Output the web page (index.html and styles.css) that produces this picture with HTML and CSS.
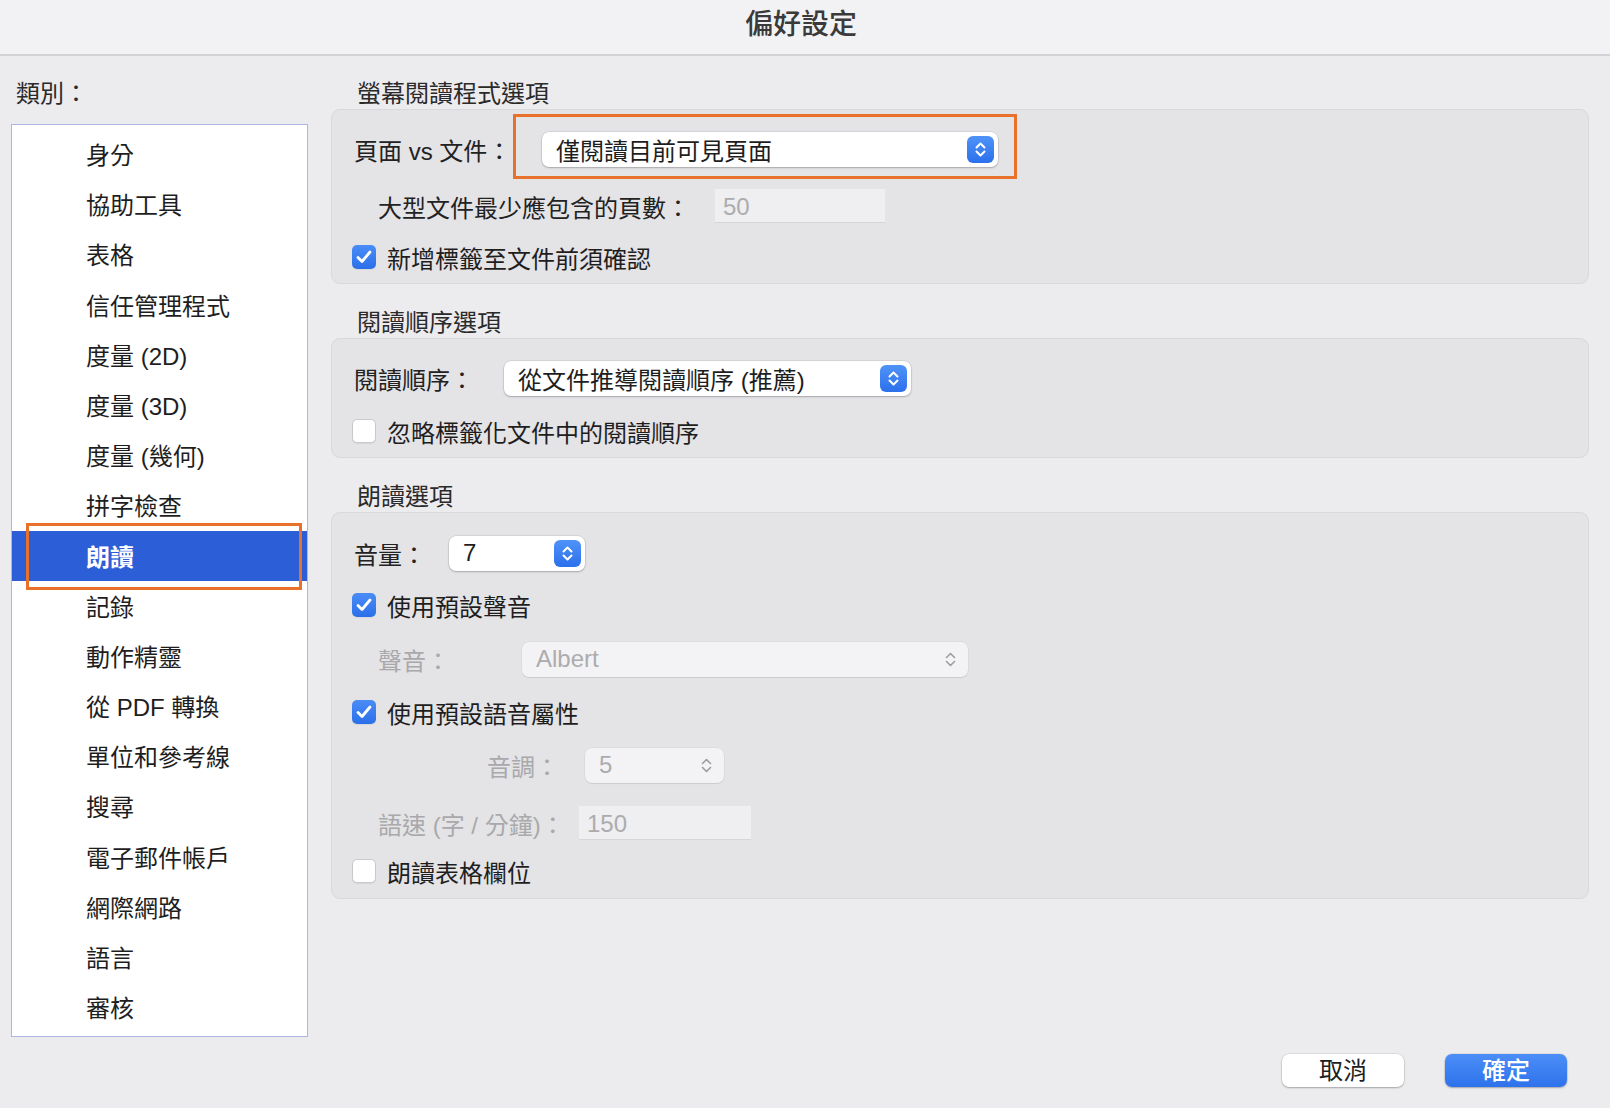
FILE: index.html
```html
<!DOCTYPE html>
<html lang="zh-Hant">

<head>
    <meta charset="UTF-8">
    <meta name="viewport" content="width=device-width, initial-scale=1.0">
    <title>偏好設定</title>
    <link rel="stylesheet" href="styles.css">
</head>

<body>
    <header class="titlebar">偏好設定</header>

    <div class="main">
        <div class="categories">
            <div class="categories-label">類別：</div>
            <ul class="category-list">
                <li>身分</li>
                <li>協助工具</li>
                <li>表格</li>
                <li>信任管理程式</li>
                <li>度量 (2D)</li>
                <li>度量 (3D)</li>
                <li>度量 (幾何)</li>
                <li>拼字檢查</li>
                <li class="selected">朗讀<span class="callout"></span></li>
                <li>記錄</li>
                <li>動作精靈</li>
                <li>從 PDF 轉換</li>
                <li>單位和參考線</li>
                <li>搜尋</li>
                <li>電子郵件帳戶</li>
                <li>網際網路</li>
                <li>語言</li>
                <li>審核</li>
            </ul>
        </div>

        <div class="panel">
            <!-- 螢幕閱讀程式 -->
            <div class="section-title">螢幕閱讀程式選項</div>
            <div class="group group-reader">
                <div class="row row-tall">
                    <span class="label label-page">頁面 vs 文件：</span>
                    <div class="popup popup-page">
                        <span>僅閱讀目前可見頁面</span>
                        <span class="stepper">
                            <svg width="27" height="27" viewBox="0 0 27 27"><path d="M9.5 11.5 L13.5 7.5 L17.5 11.5 M9.5 15.5 L13.5 19.5 L17.5 15.5" /></svg>
                        </span>
                        <span class="callout"></span>
                    </div>
                </div>
                <div class="row row-tall row-pages">
                    <span class="label label-pages">大型文件最少應包含的頁數：</span>
                    <div class="field field-pages">50</div>
                </div>
                <div class="row row-check row-confirm">
                    <span class="checkbox checked">
                        <svg width="24" height="24" viewBox="0 0 24 24"><path d="M6 12.5 L10 16.5 L18 7" /></svg>
                    </span>
                    <span class="check-label">新增標籤至文件前須確認</span>
                </div>
            </div>

            <!-- 閱讀順序 -->
            <div class="section-title">閱讀順序選項</div>
            <div class="group group-order">
                <div class="row row-tall">
                    <span class="label label-order">閱讀順序：</span>
                    <div class="popup popup-order">
                        <span>從文件推導閱讀順序 (推薦)</span>
                        <span class="stepper">
                            <svg width="27" height="27" viewBox="0 0 27 27"><path d="M9.5 11.5 L13.5 7.5 L17.5 11.5 M9.5 15.5 L13.5 19.5 L17.5 15.5" /></svg>
                        </span>
                    </div>
                </div>
                <div class="row row-check row-ignore">
                    <span class="checkbox"></span>
                    <span class="check-label">忽略標籤化文件中的閱讀順序</span>
                </div>
            </div>

            <!-- 朗讀 -->
            <div class="section-title">朗讀選項</div>
            <div class="group group-speech">
                <div class="row row-tall">
                    <span class="label label-volume">音量：</span>
                    <div class="popup popup-volume">
                        <span>7</span>
                        <span class="stepper">
                            <svg width="27" height="27" viewBox="0 0 27 27"><path d="M9.5 11.5 L13.5 7.5 L17.5 11.5 M9.5 15.5 L13.5 19.5 L17.5 15.5" /></svg>
                        </span>
                    </div>
                </div>
                <div class="row row-check sp-1">
                    <span class="checkbox checked">
                        <svg width="24" height="24" viewBox="0 0 24 24"><path d="M6 12.5 L10 16.5 L18 7" /></svg>
                    </span>
                    <span class="check-label">使用預設聲音</span>
                </div>
                <div class="row row-tall sp-2">
                    <span class="label disabled label-voice">聲音：</span>
                    <div class="popup disabled popup-voice">
                        <span>Albert</span>
                        <span class="stepper">
                            <svg width="27" height="27" viewBox="0 0 27 27"><path d="M9.5 11.5 L13.5 7.5 L17.5 11.5 M9.5 15.5 L13.5 19.5 L17.5 15.5" /></svg>
                        </span>
                    </div>
                </div>
                <div class="row row-check sp-3">
                    <span class="checkbox checked">
                        <svg width="24" height="24" viewBox="0 0 24 24"><path d="M6 12.5 L10 16.5 L18 7" /></svg>
                    </span>
                    <span class="check-label">使用預設語音屬性</span>
                </div>
                <div class="row row-tall sp-4">
                    <span class="label disabled label-pitch">音調：</span>
                    <div class="popup disabled popup-pitch">
                        <span>5</span>
                        <span class="stepper">
                            <svg width="27" height="27" viewBox="0 0 27 27"><path d="M9.5 11.5 L13.5 7.5 L17.5 11.5 M9.5 15.5 L13.5 19.5 L17.5 15.5" /></svg>
                        </span>
                    </div>
                </div>
                <div class="row row-tall sp-5">
                    <span class="label disabled label-rate">語速 (字 / 分鐘)：</span>
                    <div class="field field-rate">150</div>
                </div>
                <div class="row row-check sp-6">
                    <span class="checkbox"></span>
                    <span class="check-label">朗讀表格欄位</span>
                </div>
            </div>
        </div>
    </div>

    <footer class="buttons">
        <button class="btn">取消</button>
        <button class="btn btn-primary">確定</button>
    </footer>
</body>

</html>
```

FILE: styles.css
```css
body {
    margin: 0;
    padding: 0;
    width: 1610px;
    height: 1108px;
    display: flex;
    flex-direction: column;
    background-color: #ecebee;
    color: #222222;
    font-family: "Liberation Sans", "Noto Sans CJK TC", sans-serif;
    font-size: 24px;
    overflow: hidden;
}

.titlebar {
    height: 54px;
    line-height: 50px;
    text-align: center;
    font-size: 28px;
    font-weight: 500;
    color: #3a3a3a;
    background-color: #f2f1f4;
    border-bottom: 2px solid #d3d2d6;
    padding-right: 8px;
}

.main {
    flex: 1;
    display: flex;
    padding-top: 23px;
    min-height: 0;
}

/* colonne de gauche */
.categories {
    width: 297px;
    margin-left: 11px;
    display: flex;
    flex-direction: column;
}

.categories-label {
    height: 30px;
    line-height: 30px;
    padding-left: 5px;
    margin-bottom: 15px;
    color: #2a2a2a;
}

.category-list {
    flex: 1;
    list-style: none;
    margin: 0;
    padding: 4px 0 0 0;
    background-color: #ffffff;
    border: 1px solid #a9b9e4;
}

.category-list li {
    position: relative;
    height: 50.2px;
    line-height: 53px;
    padding-left: 74px;
    color: #1e1e1e;
}

.category-list li.selected {
    background-color: #2c5fd7;
    color: #ffffff;
    font-weight: bold;
}

.callout {
    position: absolute;
    border: 3px solid #e8712c;
    pointer-events: none;
}

.category-list li .callout {
    left: 14px;
    right: 5px;
    top: -8px;
    bottom: -9px;
}

/* panneau de droite */
.panel {
    width: 1258px;
    margin-left: 23px;
    display: flex;
    flex-direction: column;
}

.section-title {
    height: 30px;
    line-height: 30px;
    padding-left: 26px;
    color: #2a2a2a;
    margin-top: 24px;
}

.section-title:first-child {
    margin-top: 0;
}

.group {
    background-color: #e4e3e6;
    border: 1px solid #d9d8dc;
    border-radius: 9px;
    padding: 21px 0 10px 20px;
}

.group-order {
    padding-bottom: 10px;
}

.group-speech {
    padding-top: 22px;
    padding-bottom: 11px;
}

.row {
    display: flex;
    align-items: center;
}

.row-tall {
    height: 36px;
}

.row-check {
    height: 32px;
}

.row-pages { margin-top: 21px; }
.row-confirm { margin-top: 17px; }
.row-ignore { margin-top: 19px; }
.sp-1 { margin-top: 18px; }
.sp-2 { margin-top: 20px; }
.sp-3 { margin-top: 19px; }
.sp-4 { margin-top: 19px; }
.sp-5 { margin-top: 22px; }
.sp-6 { margin-top: 14px; }

.label {
    margin-left: 2px;
    flex-shrink: 0;
}

.label.disabled {
    color: #a9a9ab;
}

.label-page { width: 188px; }
.label-pages { margin-left: 26px; width: 337px; }
.label-order { width: 150px; }
.label-volume { width: 95px; }
.label-voice { margin-left: 26px; width: 144px; }
.label-pitch { margin-left: 26px; width: 181px; padding-right: 26px; text-align: right; }
.label-rate { margin-left: 26px; width: 201px; }

.popup {
    position: relative;
    height: 35px;
    display: flex;
    align-items: center;
    justify-content: space-between;
    padding: 0 4px 0 14px;
    box-sizing: border-box;
    background-color: #ffffff;
    border-radius: 7px;
    box-shadow: 0 0 0 0.5px rgba(0, 0, 0, 0.12), 0 1px 2px rgba(0, 0, 0, 0.22);
    color: #1e1e1e;
}

.popup-page { width: 456px; }
.popup-order { width: 407px; }
.popup-volume { width: 136px; }
.popup-voice { width: 446px; }
.popup-pitch { width: 139px; }

.popup .callout {
    left: -29px;
    right: -19px;
    top: -18px;
    bottom: -12px;
}

.stepper {
    width: 27px;
    height: 27px;
    border-radius: 6px;
    background: linear-gradient(#4f93f8, #2c70ec);
}

.stepper svg {
    display: block;
}

.stepper path {
    fill: none;
    stroke: #ffffff;
    stroke-width: 2;
    stroke-linecap: round;
    stroke-linejoin: round;
}

.popup.disabled {
    background-color: #f3f2f4;
    color: #acacae;
    box-shadow: 0 0 0 0.5px rgba(0, 0, 0, 0.06), 0 1px 1px rgba(0, 0, 0, 0.08);
}

.popup.disabled .stepper {
    background: none;
}

.popup.disabled .stepper path {
    stroke: #9d9d9f;
    stroke-width: 1.6;
}

.field {
    height: 34px;
    line-height: 36px;
    padding-left: 8px;
    box-sizing: border-box;
    background-color: #efeef0;
    border-bottom: 1px solid #d6d5d8;
    color: #acacae;
}

.field-pages { width: 170px; }
.field-rate { width: 172px; }

.checkbox {
    width: 24px;
    height: 24px;
    box-sizing: border-box;
    border-radius: 5px;
    background-color: #ffffff;
    border: 1px solid #c9c8cc;
    box-shadow: 0 1px 1px rgba(0, 0, 0, 0.06);
    flex-shrink: 0;
}

.checkbox.checked {
    background: linear-gradient(#4a8df7, #2b6fe9);
    border: none;
}

.checkbox svg {
    display: block;
}

.checkbox path {
    fill: none;
    stroke: #ffffff;
    stroke-width: 2.8;
    stroke-linecap: round;
    stroke-linejoin: round;
}

.check-label {
    margin-left: 11px;
    color: #1e1e1e;
}

/* boutons */
.buttons {
    display: flex;
    justify-content: flex-end;
    gap: 41px;
    padding: 17px 43px 21px 0;
}

.btn {
    width: 122px;
    height: 33px;
    padding: 0;
    font-family: "Liberation Sans", "Noto Sans CJK TC", sans-serif;
    font-size: 24px;
    line-height: 33px;
    color: #1e1e1e;
    background-color: #ffffff;
    border: none;
    border-radius: 7px;
    box-shadow: 0 0 0 0.5px rgba(0, 0, 0, 0.12), 0 1px 2px rgba(0, 0, 0, 0.25);
}

.btn-primary {
    color: #ffffff;
    font-weight: 500;
    background: linear-gradient(#4b8ef7, #2e72ec);
}
```
